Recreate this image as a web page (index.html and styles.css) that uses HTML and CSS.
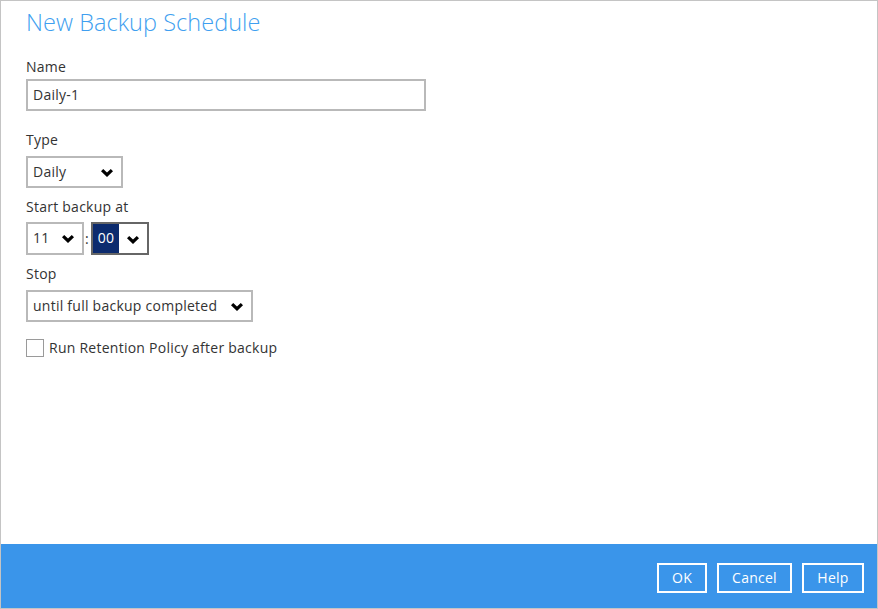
FILE: index.html
```html
<!DOCTYPE html>
<html lang="en">
<head>
  <meta charset="UTF-8">
  <title>New Backup Schedule</title>
  <link rel="stylesheet" href="styles.css">
</head>
<body>
  <div class="window">
    <div class="content">
      <h1 class="title">New Backup Schedule</h1>

      <label class="label label-name">Name</label>
      <div class="textbox">Daily-1</div>

      <label class="label label-type">Type</label>
      <div class="select select-type">
        <span>Daily</span>
        <svg class="chev" width="12" height="8" viewBox="0 0 12 8"><polygon points="0,2.2 2.2,0 6,3.6 9.8,0 12,2.2 6,8" /></svg>
      </div>

      <label class="label label-start">Start backup at</label>
      <div class="time-row">
        <div class="select select-time">
          <span>11</span>
          <svg class="chev" width="12" height="8" viewBox="0 0 12 8"><polygon points="0,2.2 2.2,0 6,3.6 9.8,0 12,2.2 6,8" /></svg>
        </div>
        <span class="colon">:</span>
        <div class="select select-time focused">
          <span class="picked">00</span>
          <svg class="chev" width="12" height="8" viewBox="0 0 12 8"><polygon points="0,2.2 2.2,0 6,3.6 9.8,0 12,2.2 6,8" /></svg>
        </div>
      </div>

      <label class="label label-stop">Stop</label>
      <div class="select select-stop">
        <span>until full backup completed</span>
        <svg class="chev" width="12" height="8" viewBox="0 0 12 8"><polygon points="0,2.2 2.2,0 6,3.6 9.8,0 12,2.2 6,8" /></svg>
      </div>

      <div class="check-row">
        <span class="checkbox"></span>
        <span>Run Retention Policy after backup</span>
      </div>
    </div>

    <!-- bottom button bar -->
    <div class="footer">
      <button class="btn btn-ok">OK</button>
      <button class="btn btn-cancel">Cancel</button>
      <button class="btn btn-help">Help</button>
    </div>
  </div>
</body>
</html>
```

FILE: styles.css
```css
body {
  margin: 0;
  font-family: "Open Sans", "Noto Sans", sans-serif;
  font-size: 14px;
  letter-spacing: 0.25px;
  color: #333333;
  background-color: #ffffff;
}
.window {
  width: 878px;
  height: 609px;
  box-sizing: border-box;
  border: 1px solid #c4c4c4;
  display: flex;
  flex-direction: column;
}
.content {
  flex: 1;
  padding: 5px 0 0 25px;
  display: flex;
  flex-direction: column;
  align-items: flex-start;
}
.title {
  margin: 0;
  font-size: 23.5px;
  font-weight: 300;
  letter-spacing: 0.05px;
  line-height: 32px;
  color: #3f9ff0;
}
.label {
  display: block;
  line-height: 20px;
}
.label-name { margin-top: 19px; }
.label-type { margin-top: 19px; }
.label-start { margin-top: 9px; }
.label-stop { margin-top: 9px; }

.textbox, .select {
  box-sizing: border-box;
  height: 32px;
  border: 2px solid #b9b9b9;
  padding: 0 0 2px 5px;
  display: flex;
  align-items: center;
  background-color: #fff;
}
.textbox {
  width: 400px;
  margin-top: 2px;
}
.select {
  margin-top: 6px;
  padding-right: 8px;
}
.select .chev {
  margin-left: auto;
  margin-top: 3px;
  fill: #000;
}
.select-type { width: 97px; }
.select-stop { width: 227px; }
.select-stop span { margin-right: 10px; }

.time-row {
  display: flex;
  align-items: center;
  margin-top: 5px;
}
.select-time {
  width: 58px;
  height: 33px;
  margin-top: 0;
}
.colon {
  width: 7px;
  box-sizing: border-box;
  padding-left: 1px;
}
.focused {
  border-color: #666666;
  padding-left: 0;
  padding-bottom: 0;
}
.picked {
  background-color: #0c2b6e;
  color: #fff;
  height: 29px;
  width: 26px;
  padding-bottom: 2px;
  box-sizing: border-box;
  display: flex;
  align-items: center;
  justify-content: center;
}

.check-row {
  display: flex;
  align-items: center;
  gap: 5px;
  margin-top: 16px;
}
.checkbox {
  box-sizing: border-box;
  width: 18px;
  height: 18px;
  border: 1px solid #9a9a9a;
  background-color: #fff;
}

.footer {
  height: 64px;
  background-color: #3a95ea;
  display: flex;
  justify-content: flex-end;
  align-items: flex-start;
  gap: 10px;
  padding: 19px 13px 0 0;
  box-sizing: border-box;
}
.btn {
  height: 30px;
  border: 2px solid #ffffff;
  background-color: transparent;
  color: #ffffff;
  font-family: "Open Sans", "Noto Sans", sans-serif;
  font-size: 14px;
  letter-spacing: 0.25px;
  padding: 0 0 2px 0;
}
.btn-ok { width: 50px; }
.btn-cancel { width: 75px; }
.btn-help { width: 62px; }
```
